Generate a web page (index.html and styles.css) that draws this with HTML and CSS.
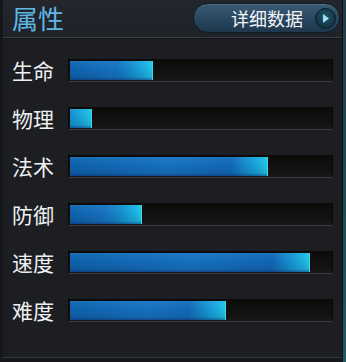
FILE: index.html
```html
<!DOCTYPE html>
<html lang="zh">
<head>
<meta charset="utf-8">
<link rel="stylesheet" href="styles.css">
</head>
<body>
<div class="frame">
  <div class="panel">
    <div class="header">
      <div class="title">属性</div>
      <div class="btn">
        <span class="btn-text">详细数据</span>
        <span class="btn-icon">
          <svg width="21" height="21" viewBox="0 0 21 21">
            <defs>
              <radialGradient id="g" cx="50%" cy="40%" r="60%">
                <stop offset="0" stop-color="#215669"/>
                <stop offset="1" stop-color="#10303e"/>
              </radialGradient>
            </defs>
            <circle cx="10.5" cy="10.5" r="10" fill="url(#g)" stroke="#0b1a24" stroke-width="1"/>
            <path d="M8 6 L14 10.5 L8 15 Z" fill="#9be2f7"/>
          </svg>
        </span>
      </div>
    </div>
    <div class="rows">
      <div class="row"><span class="label">生命</span><div class="track"><div class="fill" style="width:83px"></div></div></div>
      <div class="row"><span class="label">物理</span><div class="track"><div class="fill" style="width:22px"></div></div></div>
      <div class="row"><span class="label">法术</span><div class="track"><div class="fill" style="width:198px"></div></div></div>
      <div class="row"><span class="label">防御</span><div class="track"><div class="fill" style="width:72px"></div></div></div>
      <div class="row"><span class="label">速度</span><div class="track"><div class="fill" style="width:240px"></div></div></div>
      <div class="row"><span class="label">难度</span><div class="track"><div class="fill" style="width:156px"></div></div></div>
    </div>
  </div>
  <div class="edge"></div>
</div>
</body>
</html>
```

FILE: styles.css
```css
html, body {
  margin: 0;
  padding: 0;
  background: #15171a;
  width: 346px;
  height: 362px;
  overflow: hidden;
  font-family: "Noto Sans CJK SC", "Noto Sans", sans-serif;
}

.frame {
  display: flex;
  width: 346px;
  height: 362px;
  background: #15171a;
}

.panel {
  width: 339px;
  height: 357px;
  background: #1c1e22;
  border-left: 3px solid #141619;
  border-right: 1px solid #0d0f11;
  border-bottom: 1px solid #34373c;
  display: flex;
  flex-direction: column;
}

.edge {
  width: 3px;
  height: 362px;
  background: linear-gradient(#1f3d48, #1d4b5a 60%, #23576a);
}

.header {
  height: 37px;
  display: flex;
  align-items: center;
  justify-content: space-between;
  padding-left: 9px;
  padding-right: 2px;
  background: linear-gradient(#23262c, #1f2227);
  border-bottom: 1px solid #3a3d43;
  box-shadow: 0 1px 0 #101215;
}

.title {
  font-size: 26px;
  line-height: 30px;
  color: #5fb6e4;
  margin-top: -2px;
}

.btn {
  width: 142px;
  height: 28px;
  border-radius: 15px;
  background: linear-gradient(#3b5a73, #2a4862 50%, #1e374c);
  border: 1px solid #0e1c28;
  box-shadow: inset 0 1px 0 #50718b;
  display: flex;
  align-items: center;
  justify-content: flex-end;
  padding-right: 3px;
  margin-top: -1px;
}

.btn-text {
  color: #f2f4f6;
  font-size: 18px;
  line-height: 20px;
  margin-right: 12px;
}

.btn-icon {
  display: flex;
  width: 21px;
  height: 21px;
}

.rows {
  display: flex;
  flex-direction: column;
  padding-top: 8px;
}

.row {
  height: 48px;
  display: flex;
  align-items: center;
  padding-left: 9px;
}

.label {
  width: 56px;
  font-size: 21px;
  line-height: 24px;
  color: #eef0f2;
}

.track {
  width: 261px;
  height: 19px;
  padding: 1px;
  background: linear-gradient(#0c0c0b, #141311 80%, #1b1a18);
  border: 1px solid #0a0a0a;
  border-bottom: 1px solid #3a3834;
  display: flex;
}

.fill {
  height: 19px;
  background:
    linear-gradient(rgba(120,200,255,0.10), rgba(255,255,255,0) 35%, rgba(0,0,0,0.10) 85%, rgba(10,40,100,0.55)),
    linear-gradient(90deg, rgba(22,150,210,0), #1690d0 45%, #1cb0e0 80%, #26cae8) right / 38px 100% no-repeat,
    linear-gradient(90deg, #0f62ae, #1872c0 50%, #0f62b0);
  box-shadow: inset -1px 0 0 #3ad8ee;
}
```
